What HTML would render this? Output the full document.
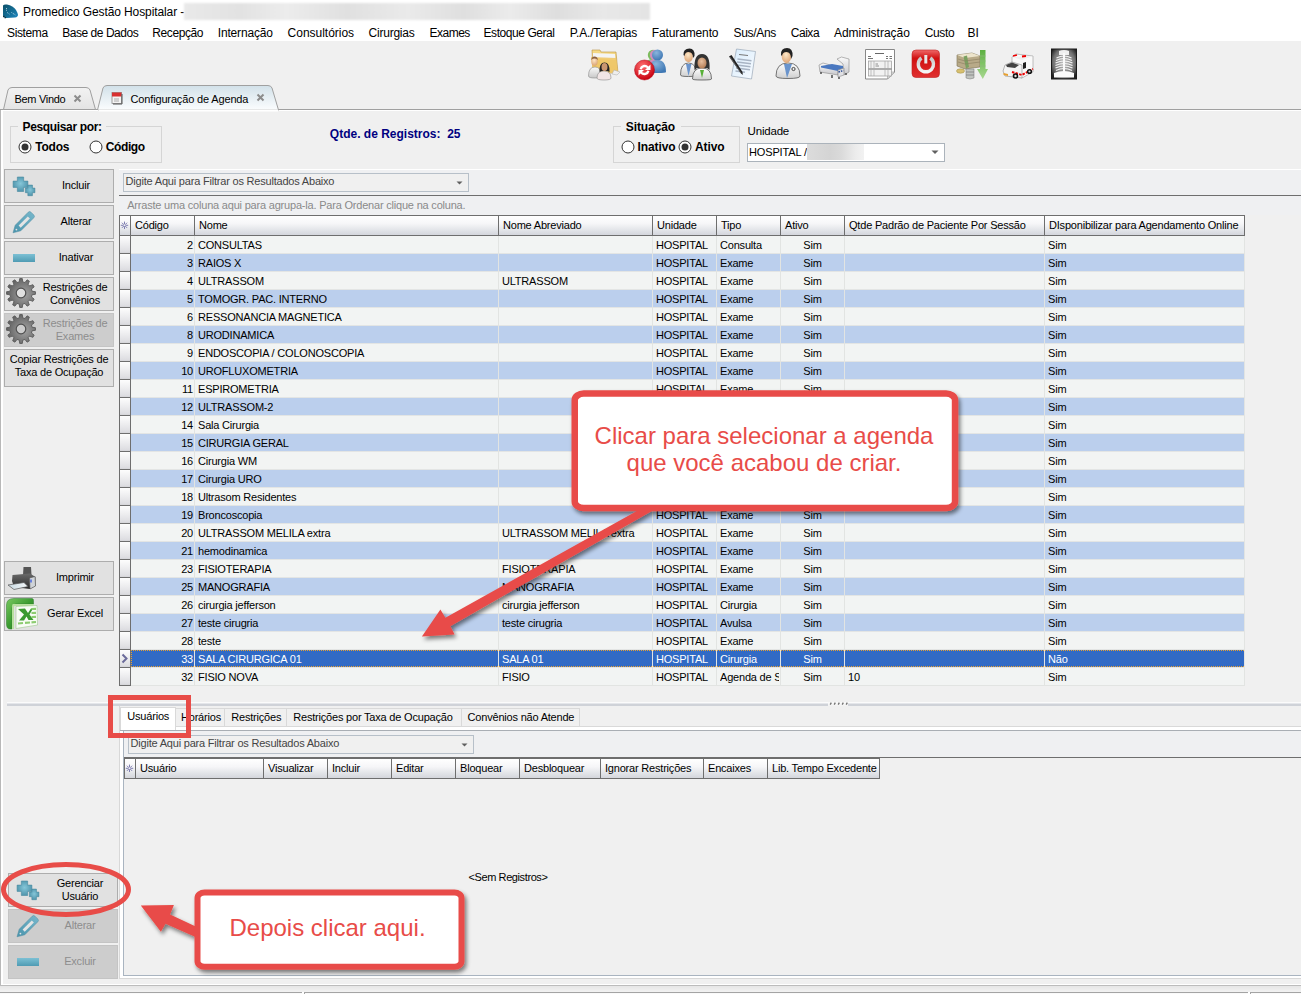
<!DOCTYPE html>
<html><head><meta charset="utf-8"><title>Promedico</title>
<style>
html,body{margin:0;padding:0}
body{width:1301px;height:994px;overflow:hidden;position:relative;background:#f0f0f0;font-family:"Liberation Sans",sans-serif;}
.t{position:absolute;white-space:pre;}
.b{position:absolute;box-sizing:border-box;}
svg{position:absolute;overflow:visible}
.tah{letter-spacing:-0.15px}
</style></head><body>

<div class="b" style="left:0px;top:0px;width:1301px;height:41px;background:#fff;"></div>
<svg style="left:0;top:0" width="22" height="22"><defs><linearGradient id="gi" x1="0" y1="0" x2="1" y2="1"><stop offset="0" stop-color="#0d5068"/><stop offset="0.6" stop-color="#15709a"/><stop offset="1" stop-color="#1f86c0"/></linearGradient></defs>
<path d="M3 5.5 Q4 4 7 4.5 Q13 5.5 16 10 Q17.5 12.5 18 14.5 Q18 17 15 17.5 L6 18 Q3 18 3 15.5Z" fill="url(#gi)"/>
<path d="M6.5 8 L6.5 11 M7.2 12.5 L10 14.5 M11.5 12.5 L15.5 15" stroke="#d8eef6" stroke-width="0.8" stroke-dasharray="0.9 0.9" fill="none"/>
<path d="M3.5 16 L6 18.5" stroke="#111" stroke-width="1.4" stroke-dasharray="1 1"/></svg>
<div class="t" style="left:23px;top:4.84px;font-size:12px;line-height:14px;color:#000;letter-spacing:-0.1px;">Promedico Gestão Hospitalar -</div>
<div class="b" style="left:184px;top:3px;width:466px;height:17px;background:linear-gradient(90deg,#e9e9e9 0%,#e2e2e2 12%,#ececec 22%,#e0e0e0 35%,#eaeaea 48%,#dfdfdf 60%,#ebebeb 70%,#dedede 80%,#e8e8e8 90%,#e4e4e4 100%);filter:blur(1px);"></div>
<div class="t" style="left:7.1px;top:25.84px;font-size:12px;line-height:14px;color:#000;letter-spacing:-0.394px;">Sistema</div>
<div class="t" style="left:62.2px;top:25.84px;font-size:12px;line-height:14px;color:#000;letter-spacing:-0.459px;">Base de Dados</div>
<div class="t" style="left:152.3px;top:25.84px;font-size:12px;line-height:14px;color:#000;letter-spacing:-0.418px;">Recepção</div>
<div class="t" style="left:217.8px;top:25.84px;font-size:12px;line-height:14px;color:#000;letter-spacing:-0.172px;">Internação</div>
<div class="t" style="left:287.6px;top:25.84px;font-size:12px;line-height:14px;color:#000;letter-spacing:-0.017px;">Consultórios</div>
<div class="t" style="left:368.6px;top:25.84px;font-size:12px;line-height:14px;color:#000;letter-spacing:-0.235px;">Cirurgias</div>
<div class="t" style="left:429.5px;top:25.84px;font-size:12px;line-height:14px;color:#000;letter-spacing:-0.5px;">Exames</div>
<div class="t" style="left:483.5px;top:25.84px;font-size:12px;line-height:14px;color:#000;letter-spacing:-0.432px;">Estoque Geral</div>
<div class="t" style="left:569.8px;top:25.84px;font-size:12px;line-height:14px;color:#000;letter-spacing:-0.194px;">P.A./Terapias</div>
<div class="t" style="left:651.8px;top:25.84px;font-size:12px;line-height:14px;color:#000;letter-spacing:-0.132px;">Faturamento</div>
<div class="t" style="left:733.6px;top:25.84px;font-size:12px;line-height:14px;color:#000;letter-spacing:-0.329px;">Sus/Ans</div>
<div class="t" style="left:790.7px;top:25.84px;font-size:12px;line-height:14px;color:#000;letter-spacing:-0.45px;">Caixa</div>
<div class="t" style="left:833.9px;top:25.84px;font-size:12px;line-height:14px;color:#000;letter-spacing:0px;">Administração</div>
<div class="t" style="left:924.7px;top:25.84px;font-size:12px;line-height:14px;color:#000;letter-spacing:-0.332px;">Custo</div>
<div class="t" style="left:967.5px;top:25.84px;font-size:12px;line-height:14px;color:#000;letter-spacing:0px;">BI</div>
<svg style="left:588px;top:48px" width="32" height="32" viewBox="0 0 32 32"><defs><linearGradient id="fo1" x1="0" y1="0" x2="0" y2="1"><stop offset="0" stop-color="#f6dc8a"/><stop offset="1" stop-color="#e2b850"/></linearGradient>
<radialGradient id="fc1" cx="45%" cy="35%" r="70%"><stop offset="0" stop-color="#fde6c8"/><stop offset="1" stop-color="#d9a070"/></radialGradient>
<linearGradient id="wb1" x1="0" y1="0" x2="0" y2="1"><stop offset="0" stop-color="#fafafa"/><stop offset="1" stop-color="#c8c8c8"/></linearGradient></defs>
<path d="M4 2 L12 2 L13 4 L28 4 L30 25 L5 25 Z" fill="url(#fo1)" stroke="#b89040" stroke-width="0.6"/>
<path d="M5 5 L27 6 L27.5 12 L5 10Z" fill="#f4f4f4"/>
<path d="M3 9 L28 10 L30 25 L5 25Z" fill="#efc86a" opacity="0.9"/>
<path d="M26 22 L32 24 L29 27 L24 26Z" fill="#eee" stroke="#aaa" stroke-width="0.5"/>
<path d="M0.5 28 Q0.5 19 7 19 Q13 19 13 27 Q13 30 7 30 Q0.5 30 0.5 28Z" fill="url(#wb1)" stroke="#888" stroke-width="0.6"/>
<ellipse cx="6.5" cy="13.5" rx="3.2" ry="4.2" fill="url(#fc1)"/><path d="M3.3 12 Q3.5 8.5 6.5 8.5 Q9.7 8.5 9.8 12 Q8 10.5 6.5 10.6 Q4.5 10.6 3.3 12Z" fill="#8a6040"/>
<path d="M9 30 Q9 23 16 23 Q23 23 23 30 Q23 32 16 32 Q9 32 9 30Z" fill="#f2e6e6" stroke="#888" stroke-width="0.6"/>
<path d="M11.5 24 Q11 14.5 16.5 14.5 Q22 14.5 21.5 24 L19.5 23 L13.5 23Z" fill="#222"/>
<ellipse cx="16.5" cy="19" rx="3" ry="4" fill="#c99670"/></svg>
<svg style="left:634px;top:48px" width="32" height="32" viewBox="0 0 32 32"><defs><radialGradient id="bl2" cx="40%" cy="30%" r="70%"><stop offset="0" stop-color="#8ab4dc"/><stop offset="1" stop-color="#3f78b4"/></radialGradient>
<radialGradient id="rd2" cx="40%" cy="30%" r="70%"><stop offset="0" stop-color="#ff7070"/><stop offset="1" stop-color="#c80010"/></radialGradient></defs>
<circle cx="19" cy="7" r="5.2" fill="#7cbc5c"/><path d="M11 20 Q11 11 19 11 Q26 11 26 20Z" fill="#7cbc5c"/>
<circle cx="21" cy="7" r="5.2" fill="#d08cbc"/><path d="M13 20 Q13 11 21 11 Q28 11 28 20Z" fill="#d08cbc"/>
<circle cx="23.5" cy="7" r="5.5" fill="url(#bl2)"/><path d="M15 24 Q15 12 23.5 12 Q32 12 32 24 Q32 25 23.5 25 Q15 25 15 24Z" fill="url(#bl2)"/>
<circle cx="10.5" cy="22" r="10" fill="url(#rd2)" stroke="#b00010" stroke-width="0.5"/>
<path d="M5.5 21 A5.2 5.2 0 0 1 14.5 18.5 L16.5 16.5 L16.5 22 L11 22 L13 20 A3.2 3.2 0 0 0 7.8 21.5Z" fill="#fff"/>
<path d="M15.5 23 A5.2 5.2 0 0 1 6.5 25.5 L4.5 27.5 L4.5 22 L10 22 L8 24 A3.2 3.2 0 0 0 13.2 22.5Z" fill="#fff"/></svg>
<svg style="left:680px;top:48px" width="32" height="32" viewBox="0 0 32 32"><defs><radialGradient id="fc3" cx="45%" cy="35%" r="70%"><stop offset="0" stop-color="#fde8c8"/><stop offset="1" stop-color="#dca070"/></radialGradient>
<radialGradient id="fw3" cx="45%" cy="35%" r="70%"><stop offset="0" stop-color="#e8c0a0"/><stop offset="1" stop-color="#b07850"/></radialGradient>
<linearGradient id="co3" x1="0" y1="0" x2="0" y2="1"><stop offset="0" stop-color="#fff"/><stop offset="1" stop-color="#d0d0d0"/></linearGradient></defs>
<path d="M0.5 27 Q0.5 15 8.5 15 Q16.5 15 16.5 27 Q16.5 28.5 8.5 28.5 Q0.5 28.5 0.5 27Z" fill="url(#co3)" stroke="#555" stroke-width="0.8"/>
<path d="M6 16 L8.5 28 L11.5 16Z" fill="#6a94cc"/>
<ellipse cx="8.5" cy="8.5" rx="4.3" ry="5.5" fill="url(#fc3)"/><path d="M3.5 7 Q3 0.5 9.5 0.5 Q15 0.5 14.5 8 L13 10 Q13 4 8.5 4 Q5 4 4.5 8Z" fill="#222"/>
<path d="M12.5 31 Q12.5 20 22 20 Q31.5 20 31.5 31 Q31.5 32 22 32 Q12.5 32 12.5 31Z" fill="url(#co3)" stroke="#555" stroke-width="0.8"/>
<path d="M20 22 L22 30 L24 22Z" fill="#58b038"/>
<path d="M14.5 22 Q13.5 6 22 6 Q30.5 6 29.5 22 L27 20 L17 20Z" fill="#333"/>
<ellipse cx="22" cy="15" rx="4.5" ry="5.5" fill="url(#fw3)"/></svg>
<svg style="left:726px;top:48px" width="32" height="32" viewBox="0 0 32 32"><defs><linearGradient id="dc4" x1="0" y1="0" x2="1" y2="1"><stop offset="0" stop-color="#d8ecfc"/><stop offset="1" stop-color="#f8fbff"/></linearGradient></defs>
<path d="M10.5 1 L29.5 3.5 L25.5 31 L5.5 28Z" fill="url(#dc4)" stroke="#9aa8b8" stroke-width="0.7"/>
<path d="M13 6.5 L22 7.5" stroke="#777" stroke-width="1"/>
<path d="M11.5 11 L25.5 12.8 M11 14 L25 15.8 M10.5 17 L24.5 18.8 M10 20 L24 21.8 M9.5 23 L19 24.3" stroke="#a8b4c4" stroke-width="1.4"/>
<path d="M3 8.5 L5.5 7 L16.5 24 L16.8 27 L14.5 25Z" fill="#222"/><path d="M4 9 L15 25" stroke="#888" stroke-width="0.6"/></svg>
<svg style="left:772px;top:48px" width="32" height="32" viewBox="0 0 32 32"><defs><radialGradient id="fc5" cx="45%" cy="35%" r="70%"><stop offset="0" stop-color="#fde8c8"/><stop offset="1" stop-color="#dca070"/></radialGradient>
<linearGradient id="co5" x1="0" y1="0" x2="0" y2="1"><stop offset="0" stop-color="#fff"/><stop offset="1" stop-color="#cfcfcf"/></linearGradient></defs>
<path d="M4 28 Q4 15 16 15 Q28 15 28 28 Q28 30.5 16 30.5 Q4 30.5 4 28Z" fill="url(#co5)" stroke="#555" stroke-width="0.8"/>
<path d="M12 16 L15 30 L20 16Z" fill="#6a94cc"/>
<circle cx="21.5" cy="21" r="1.6" fill="none" stroke="#444" stroke-width="1"/>
<ellipse cx="14.5" cy="8.5" rx="4.8" ry="6.5" fill="url(#fc5)"/><path d="M9 7 Q8.5 0 15 0 Q21 0 20.5 8 L19 11 Q19 4 14.5 4 Q10.5 4 10 8Z" fill="#222"/></svg>
<svg style="left:818px;top:48px" width="32" height="32" viewBox="0 0 32 32"><defs><linearGradient id="bd6" x1="0" y1="0" x2="0" y2="1"><stop offset="0" stop-color="#fafafa"/><stop offset="1" stop-color="#c8c8cc"/></linearGradient></defs>
<path d="M19 11 L23.5 9 L31 11 L31 24 L26 27 L25 16Z" fill="url(#bd6)" stroke="#888" stroke-width="0.6"/>
<path d="M1 17 L5 15 L20 19 L20 27 L2 24Z" fill="url(#bd6)" stroke="#888" stroke-width="0.6"/>
<path d="M3 18 L14 16 L25 18 L25 22 L20 23 L3 19.5Z" fill="#4a78c0"/>
<path d="M20 22 L26 20 L26 27 L20 29Z" fill="#e0e0e4" stroke="#888" stroke-width="0.6"/>
<path d="M20.5 24 L25.5 22.5" stroke="#2a4a90" stroke-width="1.5" stroke-dasharray="1.5 1"/>
<path d="M3 24 L3 26 M14 27 L14 30 M21 29 L21 31 M28 25 L28 27" stroke="#555" stroke-width="1.6"/></svg>
<svg style="left:864px;top:48px" width="32" height="32" viewBox="0 0 32 32"><path d="M1.5 1.5 L30.5 1.5 L30.5 24 L23.5 31 L1.5 31Z" fill="#fff" stroke="#888" stroke-width="1"/>
<path d="M23.5 31 L23.5 24 L30.5 24Z" fill="#e4e4e4" stroke="#999" stroke-width="0.6"/>
<path d="M11 5.5 L20 5.5" stroke="#666" stroke-width="1"/>
<path d="M4 8.5 L7 8.5 M4 10.5 L9 10.5 M22 8.5 L24 8.5 M25.5 8.5 L28 8.5 M22 10.5 L24 10.5 M25.5 10.5 L28 10.5" stroke="#666" stroke-width="0.9"/>
<rect x="4.5" y="13" width="23" height="15" fill="#f2f2f2" stroke="#999" stroke-width="0.7"/>
<path d="M4.5 21 L27.5 21" stroke="#666" stroke-width="1"/><path d="M7 13 L7 28 M10 13 L10 28 M21 13 L21 28 M24 13 L24 28" stroke="#aaa" stroke-width="0.7"/>
<path d="M11.5 16 L14 16 M11.5 18 L15 18" stroke="#777" stroke-width="0.8"/></svg>
<svg style="left:910px;top:48px" width="32" height="32" viewBox="0 0 32 32"><defs><linearGradient id="pw8" x1="0" y1="0" x2="0" y2="1"><stop offset="0" stop-color="#f06a6a"/><stop offset="0.3" stop-color="#d01010"/><stop offset="1" stop-color="#e03030"/></linearGradient>
<linearGradient id="rg8" x1="0" y1="0" x2="0" y2="1"><stop offset="0" stop-color="#c8c8c8"/><stop offset="1" stop-color="#f4f4f4"/></linearGradient></defs>
<rect x="2" y="2" width="27.5" height="27.5" rx="4" fill="url(#pw8)" stroke="#c02020" stroke-width="0.6"/>
<path d="M11.5 10 A7.6 7.6 0 1 0 20.3 10" stroke="url(#rg8)" stroke-width="3.4" fill="none"/><path d="M15.8 7 L15.8 15.5" stroke="#e8e8e8" stroke-width="3"/></svg>
<svg style="left:956px;top:48px" width="32" height="32" viewBox="0 0 32 32"><defs><linearGradient id="gr9" x1="0" y1="0" x2="0" y2="1"><stop offset="0" stop-color="#5cb040"/><stop offset="1" stop-color="#a8d890"/></linearGradient></defs>
<path d="M1 7 L16 5 L24 8 L24 19 L9 21 L1 18Z" fill="#b8aa88" stroke="#7a6e50" stroke-width="0.6"/>
<path d="M1 7 L16 5 L24 8 L9 10Z" fill="#ece4cc"/>
<path d="M7.5 8.5 L11 7.5 L13 19 L10 20.5Z" fill="#7aa060"/>
<path d="M2 11 L9 13 L24 11 M2 14 L9 16 L24 14" stroke="#8a7e60" stroke-width="0.6" fill="none"/>
<ellipse cx="4.5" cy="23" rx="4" ry="2.2" fill="#d8c070" stroke="#9a8a40" stroke-width="0.5"/>
<path d="M10 21 L18 21 L18 30 Q14 32 10 30Z" fill="#c0c4c0" stroke="#777" stroke-width="0.5"/><path d="M10 24 L18 24 M10 27 L18 27" stroke="#777" stroke-width="0.7"/>
<path d="M24 2 L29.5 2 L29.5 21 L32 21 L26.8 31 L21 21 L24 21Z" fill="url(#gr9)"/>
<path d="M24 8 L29.5 8 M24 13 L29.5 13 M24 18 L29.5 18" stroke="#8ab878" stroke-width="0.8"/></svg>
<svg style="left:1002px;top:48px" width="32" height="32" viewBox="0 0 32 32"><path d="M10 9 L14 6 L31 8 L31 24 L20 30 L10 26Z" fill="#fafafa" stroke="#999" stroke-width="0.6"/>
<path d="M1 23 L3 17 L10 14 L20 17 L20 30 L3 28Z" fill="#f4f4f4" stroke="#888" stroke-width="0.6"/>
<path d="M4 17 L10 14.5 L17 17 L13 20 L5 19Z" fill="#444"/>
<path d="M1.5 25 L6 26 L6 28 L1.5 27Z" fill="#e8a030"/>
<path d="M10 9 L31 8 L20 12Z" fill="#f0f0f0"/><path d="M11 8 L15 7 M20 8.5 L24 8" stroke="#e00" stroke-width="1.8"/>
<path d="M10 24 L20 27 L31 21" stroke="#e00" stroke-width="2" stroke-dasharray="2.5 1.2" fill="none"/>
<path d="M21 15 L24 14 L24 20 L21 21Z" fill="#222"/>
<circle cx="13.5" cy="28" r="2.8" fill="#111"/><circle cx="13.5" cy="28" r="1.2" fill="#ddd"/>
<circle cx="27.5" cy="23.5" r="2.6" fill="#111"/><circle cx="27.5" cy="23.5" r="1.1" fill="#ddd"/></svg>
<svg style="left:1048px;top:48px" width="32" height="32" viewBox="0 0 32 32"><defs><radialGradient id="xr11" cx="50%" cy="45%" r="65%"><stop offset="0" stop-color="#c8c8c8"/><stop offset="0.7" stop-color="#707070"/><stop offset="1" stop-color="#202020"/></radialGradient></defs>
<rect x="3" y="0.5" width="26" height="31" fill="#1a1a1a"/><rect x="4" y="1.5" width="24" height="29" fill="url(#xr11)"/>
<path d="M11 3 Q16 1 21 3 L21 7 L11 7Z" fill="#f0f0f0"/>
<path d="M8.5 10 Q16 6 23.5 10 M8 12.5 Q16 8.5 24 12.5 M7.5 15 Q16 11 24.5 15 M7.5 17.5 Q16 13.5 24.5 17.5 M7.5 20 Q16 16 24.5 20 M8 22.5 Q16 18.5 24 22.5" stroke="#f4f4f4" stroke-width="1.2" fill="none"/>
<path d="M16 5 L16 29" stroke="#fafafa" stroke-width="2"/>
<path d="M6 25 Q16 21 26 25 L26 29.5 L6 29.5Z" fill="#fafafa"/></svg>
<svg style="left:0;top:80px" width="1301" height="32">
<defs><linearGradient id="tabA" x1="0" y1="0" x2="0" y2="1"><stop offset="0" stop-color="#d2e1e9"/><stop offset="1" stop-color="#fbfdfe"/></linearGradient>
<linearGradient id="tabI" x1="0" y1="0" x2="0" y2="1"><stop offset="0" stop-color="#f2f2f2"/><stop offset="1" stop-color="#e4e4e4"/></linearGradient></defs>
<path d="M0 29.5 L1301 29.5" stroke="#a0a0a0" stroke-width="1"/>
<path d="M3.5 29.5 L8 10 Q9 7.5 12 7.5 L86 7.5 Q89 7.5 90 10 L95.5 29.5 Z" fill="url(#tabI)" stroke="#a0a0a0" stroke-width="1"/>
<path d="M97.5 30 L103 8 Q104 5.5 107 5.5 L268 5.5 Q271 5.5 272 8 L278.5 30 Z" fill="url(#tabA)" stroke="#a0a0a0" stroke-width="1"/>
<path d="M98.5 30.5 L278 30.5" stroke="#ffffff" stroke-width="2"/>
</svg>
<div class="t" style="left:14.5px;top:93.19px;font-size:11px;line-height:13px;color:#000;letter-spacing:-0.3px;">Bem Vindo</div>
<svg style="left:73px;top:94px" width="10" height="10"><path d="M1.5 1.5 L7.5 7.5 M7.5 1.5 L1.5 7.5" stroke="#8c8c8c" stroke-width="2"/></svg>
<svg style="left:111px;top:91px" width="12" height="14"><rect x="1" y="1.5" width="9.5" height="11" fill="#f4f4f4" stroke="#888" stroke-width="0.8"/><rect x="1" y="1.5" width="9.5" height="4" fill="#d83030"/><path d="M3 8 L8 8 M3 10 L8 10" stroke="#999" stroke-width="0.8"/><path d="M11 3 L11 13 L2 13" stroke="#555" stroke-width="1" fill="none"/></svg>
<div class="t" style="left:130.5px;top:92.69px;font-size:11px;line-height:13px;color:#000;letter-spacing:-0.15px;">Configuração de Agenda</div>
<svg style="left:256px;top:93px" width="10" height="10"><path d="M1.5 1.5 L7.5 7.5 M7.5 1.5 L1.5 7.5" stroke="#8c8c8c" stroke-width="2"/></svg>
<div class="b" style="left:0px;top:110px;width:1px;height:876px;background:#b8b8b8;"></div>
<div class="b" style="left:1px;top:110px;width:2px;height:875px;background:#fff;"></div>
<div class="b" style="left:1px;top:110px;width:97px;height:1px;background:#fff;"></div>
<div class="b" style="left:279px;top:110px;width:1022px;height:1px;background:#fff;"></div>
<div class="b" style="left:10px;top:126px;width:152px;height:37px;border:1px solid #d5d5d5;"></div>
<div class="b" style="left:18px;top:126px;width:88px;height:1px;background:#f0f0f0;"></div>
<div class="t" style="left:22.5px;top:119.84px;font-size:12px;line-height:14px;color:#000;font-weight:bold;letter-spacing:-0.35px;">Pesquisar por:</div>
<svg style="left:17.5px;top:139.5px" width="14" height="14"><circle cx="7" cy="7" r="6" fill="#fff" stroke="#333" stroke-width="1"/><circle cx="7" cy="7" r="3.5" fill="#333"/></svg>
<div class="t" style="left:35.3px;top:140.24px;font-size:12px;line-height:14px;color:#000;font-weight:bold;letter-spacing:-0.25px;">Todos</div>
<svg style="left:88.5px;top:139.5px" width="14" height="14"><circle cx="7" cy="7" r="6" fill="#fff" stroke="#333" stroke-width="1"/></svg>
<div class="t" style="left:105.8px;top:140.24px;font-size:12px;line-height:14px;color:#000;font-weight:bold;letter-spacing:-0.4px;">Código</div>
<div class="t" style="left:329.8px;top:127.04px;font-size:12px;line-height:14px;color:#000080;font-weight:bold;">Qtde. de Registros:  25</div>
<div class="b" style="left:613px;top:126px;width:127px;height:37px;border:1px solid #d5d5d5;"></div>
<div class="b" style="left:621px;top:126px;width:60px;height:1px;background:#f0f0f0;"></div>
<div class="t" style="left:625.8px;top:119.84px;font-size:12px;line-height:14px;color:#000;font-weight:bold;letter-spacing:-0.1px;">Situação</div>
<svg style="left:620.5px;top:139.5px" width="14" height="14"><circle cx="7" cy="7" r="6" fill="#fff" stroke="#333" stroke-width="1"/></svg>
<div class="t" style="left:637.5px;top:140.24px;font-size:12px;line-height:14px;color:#000;font-weight:bold;letter-spacing:-0.1px;">Inativo</div>
<svg style="left:678.3px;top:139.5px" width="14" height="14"><circle cx="7" cy="7" r="6" fill="#fff" stroke="#333" stroke-width="1"/><circle cx="7" cy="7" r="3.5" fill="#333"/></svg>
<div class="t" style="left:695px;top:140.24px;font-size:12px;line-height:14px;color:#000;font-weight:bold;letter-spacing:-0.1px;">Ativo</div>
<div class="t" style="left:747.6px;top:123.82px;font-size:11.5px;line-height:14px;color:#000;letter-spacing:-0.2px;">Unidade</div>
<div class="b" style="left:747px;top:143px;width:198px;height:19px;background:#fff;border:1px solid #abb3bb;"></div>
<div class="t" style="left:749px;top:146.29px;font-size:11px;line-height:13px;color:#000;letter-spacing:-0.15px;">HOSPITAL /</div>
<div class="b" style="left:807px;top:144px;width:57px;height:16px;background:linear-gradient(90deg,#dcdcdc,#d4d4d4 40%,#dadada 60%,#ececec 85%,#f2f2f2);"></div>
<svg style="left:931px;top:150px" width="8" height="5"><path d="M0.5 0.5 L7.5 0.5 L4 4Z" fill="#606060"/></svg>
<div class="b" style="left:4px;top:169px;width:110px;height:34px;background:#e1e1e1;border:1px solid #adadad;"></div>
<svg style="left:12px;top:176px" width="26" height="22"><defs><radialGradient id="pg169" cx="50%" cy="45%" r="60%"><stop offset="0" stop-color="#86c6d8"/><stop offset="1" stop-color="#4a90a8"/></radialGradient></defs><path d="M5.35 1 L11.65 1 L11.65 5.1 L15.9 5.1 L15.9 11.4 L11.65 11.4 L11.65 15.5 L5.35 15.5 L5.35 11.4 L1.1 11.4 L1.1 5.1 L5.35 5.1Z" fill="url(#pg169)" stroke="#4a8aa0" stroke-width="0.6"/><path d="M15.85 9.1 L20.45 9.1 L20.45 12.1 L22.9 12.1 L22.9 16.7 L20.45 16.7 L20.45 19.7 L15.85 19.7 L15.85 16.7 L13.4 16.7 L13.4 12.1 L15.85 12.1Z" fill="url(#pg169)" stroke="#4a8aa0" stroke-width="0.6"/></svg>
<div class="t" style="left:-4px;width:160px;text-align:center;top:179.19px;font-size:11px;line-height:13px;color:#000;letter-spacing:-0.2px">Incluir</div>
<div class="b" style="left:4px;top:205px;width:110px;height:34px;background:#e1e1e1;border:1px solid #adadad;"></div>
<svg style="left:12px;top:210px" width="26" height="26"><defs><linearGradient id="pn205" x1="0" y1="1" x2="1" y2="0"><stop offset="0" stop-color="#4a94ac"/><stop offset="1" stop-color="#78b8cc"/></linearGradient></defs><path d="M1 22.8 L3.2 15.2 L16.2 2.2 Q17.6 0.8 19 2.2 L21.8 5 Q23.2 6.4 21.8 7.8 L8.8 20.8 Z" fill="url(#pn205)" stroke="#4a8aa0" stroke-width="0.5"/><path d="M6.6 15.6 L15.8 6.4 L17.9 8.5 L8.7 17.7Z" fill="#e4e4e4"/><circle cx="4.4" cy="19.6" r="0.9" fill="#e4e4e4"/></svg>
<div class="t" style="left:-4px;width:160px;text-align:center;top:215.19px;font-size:11px;line-height:13px;color:#000;letter-spacing:-0.2px">Alterar</div>
<div class="b" style="left:4px;top:241px;width:110px;height:34px;background:#e1e1e1;border:1px solid #adadad;"></div>
<svg style="left:12px;top:253px" width="24" height="10"><defs><linearGradient id="mg241" x1="0" y1="0" x2="0" y2="1"><stop offset="0" stop-color="#7cc0d4"/><stop offset="1" stop-color="#4f9bb3"/></linearGradient></defs><rect x="1" y="1" width="22" height="8" fill="url(#mg241)"/></svg>
<div class="t" style="left:-4px;width:160px;text-align:center;top:251.19px;font-size:11px;line-height:13px;color:#000;letter-spacing:-0.2px">Inativar</div>
<div class="b" style="left:4px;top:277px;width:110px;height:34px;background:#e1e1e1;border:1px solid #adadad;"></div>
<svg style="left:5px;top:277px" width="32" height="32" opacity="1"><defs><radialGradient id="gg277" cx="60%" cy="55%" r="60%"><stop offset="0" stop-color="#a4a4a4"/><stop offset="1" stop-color="#606060"/></radialGradient></defs><path d="M27.06 14.25 L30.44 14.71 L30.44 17.29 L27.06 17.75 L26.46 20.01 L29.15 22.11 L27.86 24.34 L24.70 23.05 L23.05 24.70 L24.34 27.86 L22.11 29.15 L20.01 26.46 L17.75 27.06 L17.29 30.44 L14.71 30.44 L14.25 27.06 L11.99 26.46 L9.89 29.15 L7.66 27.86 L8.95 24.70 L7.30 23.05 L4.14 24.34 L2.85 22.11 L5.54 20.01 L4.94 17.75 L1.56 17.29 L1.56 14.71 L4.94 14.25 L5.54 11.99 L2.85 9.89 L4.14 7.66 L7.30 8.95 L8.95 7.30 L7.66 4.14 L9.89 2.85 L11.99 5.54 L14.25 4.94 L14.71 1.56 L17.29 1.56 L17.75 4.94 L20.01 5.54 L22.11 2.85 L24.34 4.14 L23.05 7.30 L24.70 8.95 L27.86 7.66 L29.15 9.89 L26.46 11.99Z" fill="url(#gg277)" stroke="#5a5a5a" stroke-width="0.9" stroke-linejoin="round"/><circle cx="16" cy="16" r="4.8" fill="#e1e1e1" stroke="#505050" stroke-width="1.2"/></svg>
<div class="t" style="left:-5px;width:160px;text-align:center;top:281.19px;font-size:11px;line-height:13px;color:#000;letter-spacing:-0.2px">Restrições de</div>
<div class="t" style="left:-5px;width:160px;text-align:center;top:294.19px;font-size:11px;line-height:13px;color:#000;letter-spacing:-0.2px">Convênios</div>
<div class="b" style="left:4px;top:313px;width:110px;height:34px;background:#cdcdcd;border:1px solid #c4c4c4;"></div>
<svg style="left:5px;top:313px" width="32" height="32" opacity="1"><defs><radialGradient id="gg313" cx="60%" cy="55%" r="60%"><stop offset="0" stop-color="#a4a4a4"/><stop offset="1" stop-color="#606060"/></radialGradient></defs><path d="M27.06 14.25 L30.44 14.71 L30.44 17.29 L27.06 17.75 L26.46 20.01 L29.15 22.11 L27.86 24.34 L24.70 23.05 L23.05 24.70 L24.34 27.86 L22.11 29.15 L20.01 26.46 L17.75 27.06 L17.29 30.44 L14.71 30.44 L14.25 27.06 L11.99 26.46 L9.89 29.15 L7.66 27.86 L8.95 24.70 L7.30 23.05 L4.14 24.34 L2.85 22.11 L5.54 20.01 L4.94 17.75 L1.56 17.29 L1.56 14.71 L4.94 14.25 L5.54 11.99 L2.85 9.89 L4.14 7.66 L7.30 8.95 L8.95 7.30 L7.66 4.14 L9.89 2.85 L11.99 5.54 L14.25 4.94 L14.71 1.56 L17.29 1.56 L17.75 4.94 L20.01 5.54 L22.11 2.85 L24.34 4.14 L23.05 7.30 L24.70 8.95 L27.86 7.66 L29.15 9.89 L26.46 11.99Z" fill="url(#gg313)" stroke="#5a5a5a" stroke-width="0.9" stroke-linejoin="round"/><circle cx="16" cy="16" r="4.8" fill="#cdcdcd" stroke="#505050" stroke-width="1.2"/></svg>
<div class="t" style="left:-5px;width:160px;text-align:center;top:317.19px;font-size:11px;line-height:13px;color:#8d8d8d;letter-spacing:-0.2px">Restrições de</div>
<div class="t" style="left:-5px;width:160px;text-align:center;top:330.19px;font-size:11px;line-height:13px;color:#8d8d8d;letter-spacing:-0.2px">Exames</div>
<div class="b" style="left:4px;top:349px;width:110px;height:38px;background:#e1e1e1;border:1px solid #adadad;"></div>
<div class="t" style="left:-21px;width:160px;text-align:center;top:353.19px;font-size:11px;line-height:13px;color:#000;letter-spacing:-0.2px">Copiar Restrições de</div>
<div class="t" style="left:-21px;width:160px;text-align:center;top:366.19px;font-size:11px;line-height:13px;color:#000;letter-spacing:-0.2px">Taxa de Ocupação</div>
<div class="b" style="left:4px;top:561px;width:110px;height:34px;background:#e1e1e1;border:1px solid #adadad;"></div>
<svg style="left:4px;top:561px" width="36" height="34"><defs><linearGradient id="pr1" x1="0" y1="0" x2="0" y2="1"><stop offset="0" stop-color="#6a6a6a"/><stop offset="1" stop-color="#2a2a2a"/></linearGradient><linearGradient id="pr2" x1="0" y1="0" x2="1" y2="0"><stop offset="0" stop-color="#c8d8e0"/><stop offset="1" stop-color="#f4f8fa"/></linearGradient></defs><path d="M19.5 6 L27 6 L27.5 14 L19 14Z" fill="#555"/><path d="M8.5 14 L26 12.5 L31.5 16 L31.5 25 L26 28 L10 26 L8 20Z" fill="url(#pr1)"/><path d="M25.5 17 L31 15.5 L31.5 25 L26 28Z" fill="#d0d4d8" stroke="#555" stroke-width="0.6"/><rect x="26.3" y="18.5" width="1.4" height="3" fill="#4060e0"/><path d="M4 24 L20 21.5 L24 25.5 L10 28.5Z" fill="url(#pr2)" stroke="#555" stroke-width="0.7"/></svg>
<div class="t" style="left:-5px;width:160px;text-align:center;top:571.19px;font-size:11px;line-height:13px;color:#000;letter-spacing:-0.2px">Imprimir</div>
<div class="b" style="left:4px;top:597px;width:110px;height:34px;background:#e1e1e1;border:1px solid #adadad;"></div>
<svg style="left:4px;top:597px" width="36" height="34"><defs><linearGradient id="xg" x1="0" y1="0" x2="1" y2="1"><stop offset="0" stop-color="#78c860"/><stop offset="0.5" stop-color="#3a9a30"/><stop offset="1" stop-color="#1e6a20"/></linearGradient></defs><path d="M2.5 8 Q2.5 1.5 10 1.5 L28 1.5 Q29.5 1.5 29.5 3.5 L29.5 7 L12 7 Q8 7 8 11 L8 32 L6 32 Q2.5 32 2.5 27Z" fill="url(#xg)" stroke="#2a7a2a" stroke-width="0.5"/><path d="M9 7 L29.5 7 L29.5 9 L11 9 Q10 9 10 10 L10 32 L8 32 L8 11 Q8 7 9 7Z" fill="#b8e0a0"/><path d="M12 9.5 L33 8.5 L33.5 28 L12 31.5Z" fill="#f8fcf6" stroke="#a0c890" stroke-width="0.6"/><path d="M14 12 L21 11.5 L24 16 L27 11.5 L29 11.5 L25.5 17.5 L29.5 23 L24.5 23 L22.5 19.5 L20 23.5 L15 23.5 L20 17.5Z" fill="#3a9a30"/><path d="M27.5 12 L32 11.8 M27.5 16 L32 15.8 M27.5 20 L32 19.8 M14 26.5 L19 26 M21 25.8 L26 25.5 M27.5 25.3 L32 25" stroke="#8ccc70" stroke-width="2.2"/></svg>
<div class="t" style="left:-5px;width:160px;text-align:center;top:607.19px;font-size:11px;line-height:13px;color:#000;letter-spacing:-0.2px">Gerar Excel</div>
<div class="b" style="left:119px;top:169px;width:1182px;height:1px;background:#fff;"></div>
<div class="b" style="left:119px;top:170px;width:1182px;height:25px;background:#eff0f2;"></div>
<div class="b" style="left:119px;top:195px;width:1182px;height:1px;background:#6e6e6e;"></div>
<div class="b" style="left:123px;top:173px;width:346px;height:19px;background:#f0f0f0;border:1px solid #b7c0c9;"></div>
<div class="t" style="left:125.6px;top:175.39px;font-size:11px;line-height:13px;color:#444;letter-spacing:-0.2px;">Digite Aqui para Filtrar os Resultados Abaixo</div>
<svg style="left:456px;top:181px" width="8" height="5"><path d="M0.5 0.5 L6.5 0.5 L3.5 3.5Z" fill="#606060"/></svg>
<div class="b" style="left:119px;top:196px;width:1182px;height:19px;background:#eff0f2;"></div>
<div class="t" style="left:127.2px;top:198.99px;font-size:11px;line-height:13px;color:#8a8a8a;letter-spacing:-0.2px;">Arraste uma coluna aqui para agrupa-la. Para Ordenar clique na coluna.</div>
<div class="b" style="left:119px;top:215px;width:1126px;height:21px;background:linear-gradient(#ffffff,#f6f6f8 40%,#e2e4e8 75%,#d4d6dc);border:1px solid #6e6e6e;"></div>
<div class="b" style="left:130px;top:215px;width:1px;height:21px;background:#6e6e6e;"></div>
<div class="b" style="left:194px;top:215px;width:1px;height:21px;background:#6e6e6e;"></div>
<div class="b" style="left:498px;top:215px;width:1px;height:21px;background:#6e6e6e;"></div>
<div class="b" style="left:652px;top:215px;width:1px;height:21px;background:#6e6e6e;"></div>
<div class="b" style="left:716px;top:215px;width:1px;height:21px;background:#6e6e6e;"></div>
<div class="b" style="left:780px;top:215px;width:1px;height:21px;background:#6e6e6e;"></div>
<div class="b" style="left:844px;top:215px;width:1px;height:21px;background:#6e6e6e;"></div>
<div class="b" style="left:1044px;top:215px;width:1px;height:21px;background:#6e6e6e;"></div>
<svg style="left:120px;top:219px" width="10" height="12"><g stroke="#7070a8" stroke-width="0.9" stroke-linecap="round"><path d="M4.5 3 L4.5 9.6 M1.2 6.3 L7.8 6.3 M2.2 4 L6.8 8.6 M2.2 8.6 L6.8 4"/></g><circle cx="4.5" cy="6.3" r="1" fill="#f0f0f4"/></svg>
<div class="t" style="left:135px;top:218.89px;font-size:11px;line-height:13px;color:#000;letter-spacing:-0.2px;">Código</div>
<div class="t" style="left:199px;top:218.89px;font-size:11px;line-height:13px;color:#000;letter-spacing:-0.2px;">Nome</div>
<div class="t" style="left:503px;top:218.89px;font-size:11px;line-height:13px;color:#000;letter-spacing:-0.2px;">Nome Abreviado</div>
<div class="t" style="left:657px;top:218.89px;font-size:11px;line-height:13px;color:#000;letter-spacing:-0.2px;">Unidade</div>
<div class="t" style="left:721px;top:218.89px;font-size:11px;line-height:13px;color:#000;letter-spacing:-0.2px;">Tipo</div>
<div class="t" style="left:785px;top:218.89px;font-size:11px;line-height:13px;color:#000;letter-spacing:-0.2px;">Ativo</div>
<div class="t" style="left:849px;top:218.89px;font-size:11px;line-height:13px;color:#000;letter-spacing:-0.2px;">Qtde Padrão de Paciente Por Sessão</div>
<div class="t" style="left:1049px;top:218.89px;font-size:11px;line-height:13px;color:#000;letter-spacing:-0.2px;">DIsponibilizar para Agendamento Online</div>
<div class="b" style="left:131px;top:236px;width:1113px;height:17px;background:#f2f4f3;"></div>
<div class="b" style="left:131px;top:253px;width:1113px;height:1px;background:#e3e5e4;"></div>
<div class="b" style="left:120px;top:236px;width:10px;height:17px;background:linear-gradient(#fdfdfd,#eeeef0 45%,#dedee2 90%,#d4d4d8);"></div>
<div class="b" style="left:119px;top:253px;width:12px;height:1px;background:#6e6e6e;"></div>
<div class="b" style="left:131px;top:254px;width:1113px;height:17px;background:#bbcfed;"></div>
<div class="b" style="left:131px;top:271px;width:1113px;height:1px;background:#e3e5e4;"></div>
<div class="b" style="left:120px;top:254px;width:10px;height:17px;background:linear-gradient(#fdfdfd,#eeeef0 45%,#dedee2 90%,#d4d4d8);"></div>
<div class="b" style="left:119px;top:271px;width:12px;height:1px;background:#6e6e6e;"></div>
<div class="b" style="left:131px;top:272px;width:1113px;height:17px;background:#f2f4f3;"></div>
<div class="b" style="left:131px;top:289px;width:1113px;height:1px;background:#e3e5e4;"></div>
<div class="b" style="left:120px;top:272px;width:10px;height:17px;background:linear-gradient(#fdfdfd,#eeeef0 45%,#dedee2 90%,#d4d4d8);"></div>
<div class="b" style="left:119px;top:289px;width:12px;height:1px;background:#6e6e6e;"></div>
<div class="b" style="left:131px;top:290px;width:1113px;height:17px;background:#bbcfed;"></div>
<div class="b" style="left:131px;top:307px;width:1113px;height:1px;background:#e3e5e4;"></div>
<div class="b" style="left:120px;top:290px;width:10px;height:17px;background:linear-gradient(#fdfdfd,#eeeef0 45%,#dedee2 90%,#d4d4d8);"></div>
<div class="b" style="left:119px;top:307px;width:12px;height:1px;background:#6e6e6e;"></div>
<div class="b" style="left:131px;top:308px;width:1113px;height:17px;background:#f2f4f3;"></div>
<div class="b" style="left:131px;top:325px;width:1113px;height:1px;background:#e3e5e4;"></div>
<div class="b" style="left:120px;top:308px;width:10px;height:17px;background:linear-gradient(#fdfdfd,#eeeef0 45%,#dedee2 90%,#d4d4d8);"></div>
<div class="b" style="left:119px;top:325px;width:12px;height:1px;background:#6e6e6e;"></div>
<div class="b" style="left:131px;top:326px;width:1113px;height:17px;background:#bbcfed;"></div>
<div class="b" style="left:131px;top:343px;width:1113px;height:1px;background:#e3e5e4;"></div>
<div class="b" style="left:120px;top:326px;width:10px;height:17px;background:linear-gradient(#fdfdfd,#eeeef0 45%,#dedee2 90%,#d4d4d8);"></div>
<div class="b" style="left:119px;top:343px;width:12px;height:1px;background:#6e6e6e;"></div>
<div class="b" style="left:131px;top:344px;width:1113px;height:17px;background:#f2f4f3;"></div>
<div class="b" style="left:131px;top:361px;width:1113px;height:1px;background:#e3e5e4;"></div>
<div class="b" style="left:120px;top:344px;width:10px;height:17px;background:linear-gradient(#fdfdfd,#eeeef0 45%,#dedee2 90%,#d4d4d8);"></div>
<div class="b" style="left:119px;top:361px;width:12px;height:1px;background:#6e6e6e;"></div>
<div class="b" style="left:131px;top:362px;width:1113px;height:17px;background:#bbcfed;"></div>
<div class="b" style="left:131px;top:379px;width:1113px;height:1px;background:#e3e5e4;"></div>
<div class="b" style="left:120px;top:362px;width:10px;height:17px;background:linear-gradient(#fdfdfd,#eeeef0 45%,#dedee2 90%,#d4d4d8);"></div>
<div class="b" style="left:119px;top:379px;width:12px;height:1px;background:#6e6e6e;"></div>
<div class="b" style="left:131px;top:380px;width:1113px;height:17px;background:#f2f4f3;"></div>
<div class="b" style="left:131px;top:397px;width:1113px;height:1px;background:#e3e5e4;"></div>
<div class="b" style="left:120px;top:380px;width:10px;height:17px;background:linear-gradient(#fdfdfd,#eeeef0 45%,#dedee2 90%,#d4d4d8);"></div>
<div class="b" style="left:119px;top:397px;width:12px;height:1px;background:#6e6e6e;"></div>
<div class="b" style="left:131px;top:398px;width:1113px;height:17px;background:#bbcfed;"></div>
<div class="b" style="left:131px;top:415px;width:1113px;height:1px;background:#e3e5e4;"></div>
<div class="b" style="left:120px;top:398px;width:10px;height:17px;background:linear-gradient(#fdfdfd,#eeeef0 45%,#dedee2 90%,#d4d4d8);"></div>
<div class="b" style="left:119px;top:415px;width:12px;height:1px;background:#6e6e6e;"></div>
<div class="b" style="left:131px;top:416px;width:1113px;height:17px;background:#f2f4f3;"></div>
<div class="b" style="left:131px;top:433px;width:1113px;height:1px;background:#e3e5e4;"></div>
<div class="b" style="left:120px;top:416px;width:10px;height:17px;background:linear-gradient(#fdfdfd,#eeeef0 45%,#dedee2 90%,#d4d4d8);"></div>
<div class="b" style="left:119px;top:433px;width:12px;height:1px;background:#6e6e6e;"></div>
<div class="b" style="left:131px;top:434px;width:1113px;height:17px;background:#bbcfed;"></div>
<div class="b" style="left:131px;top:451px;width:1113px;height:1px;background:#e3e5e4;"></div>
<div class="b" style="left:120px;top:434px;width:10px;height:17px;background:linear-gradient(#fdfdfd,#eeeef0 45%,#dedee2 90%,#d4d4d8);"></div>
<div class="b" style="left:119px;top:451px;width:12px;height:1px;background:#6e6e6e;"></div>
<div class="b" style="left:131px;top:452px;width:1113px;height:17px;background:#f2f4f3;"></div>
<div class="b" style="left:131px;top:469px;width:1113px;height:1px;background:#e3e5e4;"></div>
<div class="b" style="left:120px;top:452px;width:10px;height:17px;background:linear-gradient(#fdfdfd,#eeeef0 45%,#dedee2 90%,#d4d4d8);"></div>
<div class="b" style="left:119px;top:469px;width:12px;height:1px;background:#6e6e6e;"></div>
<div class="b" style="left:131px;top:470px;width:1113px;height:17px;background:#bbcfed;"></div>
<div class="b" style="left:131px;top:487px;width:1113px;height:1px;background:#e3e5e4;"></div>
<div class="b" style="left:120px;top:470px;width:10px;height:17px;background:linear-gradient(#fdfdfd,#eeeef0 45%,#dedee2 90%,#d4d4d8);"></div>
<div class="b" style="left:119px;top:487px;width:12px;height:1px;background:#6e6e6e;"></div>
<div class="b" style="left:131px;top:488px;width:1113px;height:17px;background:#f2f4f3;"></div>
<div class="b" style="left:131px;top:505px;width:1113px;height:1px;background:#e3e5e4;"></div>
<div class="b" style="left:120px;top:488px;width:10px;height:17px;background:linear-gradient(#fdfdfd,#eeeef0 45%,#dedee2 90%,#d4d4d8);"></div>
<div class="b" style="left:119px;top:505px;width:12px;height:1px;background:#6e6e6e;"></div>
<div class="b" style="left:131px;top:506px;width:1113px;height:17px;background:#bbcfed;"></div>
<div class="b" style="left:131px;top:523px;width:1113px;height:1px;background:#e3e5e4;"></div>
<div class="b" style="left:120px;top:506px;width:10px;height:17px;background:linear-gradient(#fdfdfd,#eeeef0 45%,#dedee2 90%,#d4d4d8);"></div>
<div class="b" style="left:119px;top:523px;width:12px;height:1px;background:#6e6e6e;"></div>
<div class="b" style="left:131px;top:524px;width:1113px;height:17px;background:#f2f4f3;"></div>
<div class="b" style="left:131px;top:541px;width:1113px;height:1px;background:#e3e5e4;"></div>
<div class="b" style="left:120px;top:524px;width:10px;height:17px;background:linear-gradient(#fdfdfd,#eeeef0 45%,#dedee2 90%,#d4d4d8);"></div>
<div class="b" style="left:119px;top:541px;width:12px;height:1px;background:#6e6e6e;"></div>
<div class="b" style="left:131px;top:542px;width:1113px;height:17px;background:#bbcfed;"></div>
<div class="b" style="left:131px;top:559px;width:1113px;height:1px;background:#e3e5e4;"></div>
<div class="b" style="left:120px;top:542px;width:10px;height:17px;background:linear-gradient(#fdfdfd,#eeeef0 45%,#dedee2 90%,#d4d4d8);"></div>
<div class="b" style="left:119px;top:559px;width:12px;height:1px;background:#6e6e6e;"></div>
<div class="b" style="left:131px;top:560px;width:1113px;height:17px;background:#f2f4f3;"></div>
<div class="b" style="left:131px;top:577px;width:1113px;height:1px;background:#e3e5e4;"></div>
<div class="b" style="left:120px;top:560px;width:10px;height:17px;background:linear-gradient(#fdfdfd,#eeeef0 45%,#dedee2 90%,#d4d4d8);"></div>
<div class="b" style="left:119px;top:577px;width:12px;height:1px;background:#6e6e6e;"></div>
<div class="b" style="left:131px;top:578px;width:1113px;height:17px;background:#bbcfed;"></div>
<div class="b" style="left:131px;top:595px;width:1113px;height:1px;background:#e3e5e4;"></div>
<div class="b" style="left:120px;top:578px;width:10px;height:17px;background:linear-gradient(#fdfdfd,#eeeef0 45%,#dedee2 90%,#d4d4d8);"></div>
<div class="b" style="left:119px;top:595px;width:12px;height:1px;background:#6e6e6e;"></div>
<div class="b" style="left:131px;top:596px;width:1113px;height:17px;background:#f2f4f3;"></div>
<div class="b" style="left:131px;top:613px;width:1113px;height:1px;background:#e3e5e4;"></div>
<div class="b" style="left:120px;top:596px;width:10px;height:17px;background:linear-gradient(#fdfdfd,#eeeef0 45%,#dedee2 90%,#d4d4d8);"></div>
<div class="b" style="left:119px;top:613px;width:12px;height:1px;background:#6e6e6e;"></div>
<div class="b" style="left:131px;top:614px;width:1113px;height:17px;background:#bbcfed;"></div>
<div class="b" style="left:131px;top:631px;width:1113px;height:1px;background:#e3e5e4;"></div>
<div class="b" style="left:120px;top:614px;width:10px;height:17px;background:linear-gradient(#fdfdfd,#eeeef0 45%,#dedee2 90%,#d4d4d8);"></div>
<div class="b" style="left:119px;top:631px;width:12px;height:1px;background:#6e6e6e;"></div>
<div class="b" style="left:131px;top:632px;width:1113px;height:17px;background:#f2f4f3;"></div>
<div class="b" style="left:131px;top:649px;width:1113px;height:1px;background:#e3e5e4;"></div>
<div class="b" style="left:120px;top:632px;width:10px;height:17px;background:linear-gradient(#fdfdfd,#eeeef0 45%,#dedee2 90%,#d4d4d8);"></div>
<div class="b" style="left:119px;top:649px;width:12px;height:1px;background:#6e6e6e;"></div>
<div class="b" style="left:131px;top:650px;width:1113px;height:17px;background:#316ac5;"></div>
<div class="b" style="left:131px;top:667px;width:1113px;height:1px;background:#e3e5e4;"></div>
<div class="b" style="left:120px;top:650px;width:10px;height:17px;background:linear-gradient(#fdfdfd,#eeeef0 45%,#dedee2 90%,#d4d4d8);"></div>
<div class="b" style="left:119px;top:667px;width:12px;height:1px;background:#6e6e6e;"></div>
<div class="b" style="left:131px;top:668px;width:1113px;height:17px;background:#f2f4f3;"></div>
<div class="b" style="left:131px;top:685px;width:1113px;height:1px;background:#e3e5e4;"></div>
<div class="b" style="left:120px;top:668px;width:10px;height:17px;background:linear-gradient(#fdfdfd,#eeeef0 45%,#dedee2 90%,#d4d4d8);"></div>
<div class="b" style="left:119px;top:685px;width:12px;height:1px;background:#6e6e6e;"></div>
<div class="b" style="left:119px;top:236px;width:1px;height:450px;background:#6e6e6e;"></div>
<div class="b" style="left:130px;top:236px;width:1px;height:450px;background:#6e6e6e;"></div>
<div class="b" style="left:194px;top:236px;width:1px;height:450px;background:#e2e4e2;"></div>
<div class="b" style="left:498px;top:236px;width:1px;height:450px;background:#e2e4e2;"></div>
<div class="b" style="left:652px;top:236px;width:1px;height:450px;background:#e2e4e2;"></div>
<div class="b" style="left:716px;top:236px;width:1px;height:450px;background:#e2e4e2;"></div>
<div class="b" style="left:780px;top:236px;width:1px;height:450px;background:#e2e4e2;"></div>
<div class="b" style="left:844px;top:236px;width:1px;height:450px;background:#e2e4e2;"></div>
<div class="b" style="left:1044px;top:236px;width:1px;height:450px;background:#e2e4e2;"></div>
<div class="b" style="left:1244px;top:236px;width:1px;height:450px;background:#e2e4e2;"></div>
<div class="b" style="left:131px;top:685px;width:1114px;height:1px;background:#e2e4e2;"></div>
<div class="b" style="left:131px;top:650px;width:1113px;height:1px;background:repeating-linear-gradient(90deg,#e8a030 0 1px,transparent 1px 2px);"></div>
<div class="b" style="left:131px;top:666px;width:1113px;height:1px;background:repeating-linear-gradient(90deg,#e8a030 0 1px,transparent 1px 2px);"></div>
<div class="b" style="left:131px;top:650px;width:1px;height:17px;background:repeating-linear-gradient(180deg,#e8a030 0 1px,transparent 1px 2px);"></div>
<svg style="left:120px;top:652px" width="10" height="14"><path d="M2.5 2.5 L6.5 6.5 L2.5 10.5" stroke="#6b6b9a" stroke-width="2" fill="none"/></svg>
<div class="t" style="left:131px;width:62px;text-align:right;top:238.70px;font-size:11px;line-height:13px;color:#000;letter-spacing:-0.2px">2</div>
<div class="t" style="left:198px;top:238.69px;font-size:11px;line-height:13px;color:#000;letter-spacing:-0.2px;">CONSULTAS</div>
<div class="t" style="left:656px;top:238.69px;font-size:11px;line-height:13px;color:#000;letter-spacing:-0.2px;">HOSPITAL</div>
<div class="t" style="left:720px;width:59px;overflow:hidden;top:238.70px;font-size:11px;line-height:13px;color:#000;letter-spacing:-0.2px">Consulta</div>
<div class="t" style="left:781px;width:63px;text-align:center;top:238.70px;font-size:11px;line-height:13px;color:#000;letter-spacing:-0.2px">Sim</div>
<div class="t" style="left:1048px;top:238.69px;font-size:11px;line-height:13px;color:#000;letter-spacing:-0.2px;">Sim</div>
<div class="t" style="left:131px;width:62px;text-align:right;top:256.70px;font-size:11px;line-height:13px;color:#000;letter-spacing:-0.2px">3</div>
<div class="t" style="left:198px;top:256.69px;font-size:11px;line-height:13px;color:#000;letter-spacing:-0.2px;">RAIOS X</div>
<div class="t" style="left:656px;top:256.69px;font-size:11px;line-height:13px;color:#000;letter-spacing:-0.2px;">HOSPITAL</div>
<div class="t" style="left:720px;width:59px;overflow:hidden;top:256.70px;font-size:11px;line-height:13px;color:#000;letter-spacing:-0.2px">Exame</div>
<div class="t" style="left:781px;width:63px;text-align:center;top:256.70px;font-size:11px;line-height:13px;color:#000;letter-spacing:-0.2px">Sim</div>
<div class="t" style="left:1048px;top:256.69px;font-size:11px;line-height:13px;color:#000;letter-spacing:-0.2px;">Sim</div>
<div class="t" style="left:131px;width:62px;text-align:right;top:274.70px;font-size:11px;line-height:13px;color:#000;letter-spacing:-0.2px">4</div>
<div class="t" style="left:198px;top:274.69px;font-size:11px;line-height:13px;color:#000;letter-spacing:-0.2px;">ULTRASSOM</div>
<div class="t" style="left:502px;top:274.69px;font-size:11px;line-height:13px;color:#000;letter-spacing:-0.2px;">ULTRASSOM</div>
<div class="t" style="left:656px;top:274.69px;font-size:11px;line-height:13px;color:#000;letter-spacing:-0.2px;">HOSPITAL</div>
<div class="t" style="left:720px;width:59px;overflow:hidden;top:274.70px;font-size:11px;line-height:13px;color:#000;letter-spacing:-0.2px">Exame</div>
<div class="t" style="left:781px;width:63px;text-align:center;top:274.70px;font-size:11px;line-height:13px;color:#000;letter-spacing:-0.2px">Sim</div>
<div class="t" style="left:1048px;top:274.69px;font-size:11px;line-height:13px;color:#000;letter-spacing:-0.2px;">Sim</div>
<div class="t" style="left:131px;width:62px;text-align:right;top:292.70px;font-size:11px;line-height:13px;color:#000;letter-spacing:-0.2px">5</div>
<div class="t" style="left:198px;top:292.69px;font-size:11px;line-height:13px;color:#000;letter-spacing:-0.2px;">TOMOGR. PAC. INTERNO</div>
<div class="t" style="left:656px;top:292.69px;font-size:11px;line-height:13px;color:#000;letter-spacing:-0.2px;">HOSPITAL</div>
<div class="t" style="left:720px;width:59px;overflow:hidden;top:292.70px;font-size:11px;line-height:13px;color:#000;letter-spacing:-0.2px">Exame</div>
<div class="t" style="left:781px;width:63px;text-align:center;top:292.70px;font-size:11px;line-height:13px;color:#000;letter-spacing:-0.2px">Sim</div>
<div class="t" style="left:1048px;top:292.69px;font-size:11px;line-height:13px;color:#000;letter-spacing:-0.2px;">Sim</div>
<div class="t" style="left:131px;width:62px;text-align:right;top:310.70px;font-size:11px;line-height:13px;color:#000;letter-spacing:-0.2px">6</div>
<div class="t" style="left:198px;top:310.69px;font-size:11px;line-height:13px;color:#000;letter-spacing:-0.2px;">RESSONANCIA MAGNETICA</div>
<div class="t" style="left:656px;top:310.69px;font-size:11px;line-height:13px;color:#000;letter-spacing:-0.2px;">HOSPITAL</div>
<div class="t" style="left:720px;width:59px;overflow:hidden;top:310.70px;font-size:11px;line-height:13px;color:#000;letter-spacing:-0.2px">Exame</div>
<div class="t" style="left:781px;width:63px;text-align:center;top:310.70px;font-size:11px;line-height:13px;color:#000;letter-spacing:-0.2px">Sim</div>
<div class="t" style="left:1048px;top:310.69px;font-size:11px;line-height:13px;color:#000;letter-spacing:-0.2px;">Sim</div>
<div class="t" style="left:131px;width:62px;text-align:right;top:328.70px;font-size:11px;line-height:13px;color:#000;letter-spacing:-0.2px">8</div>
<div class="t" style="left:198px;top:328.69px;font-size:11px;line-height:13px;color:#000;letter-spacing:-0.2px;">URODINAMICA</div>
<div class="t" style="left:656px;top:328.69px;font-size:11px;line-height:13px;color:#000;letter-spacing:-0.2px;">HOSPITAL</div>
<div class="t" style="left:720px;width:59px;overflow:hidden;top:328.70px;font-size:11px;line-height:13px;color:#000;letter-spacing:-0.2px">Exame</div>
<div class="t" style="left:781px;width:63px;text-align:center;top:328.70px;font-size:11px;line-height:13px;color:#000;letter-spacing:-0.2px">Sim</div>
<div class="t" style="left:1048px;top:328.69px;font-size:11px;line-height:13px;color:#000;letter-spacing:-0.2px;">Sim</div>
<div class="t" style="left:131px;width:62px;text-align:right;top:346.70px;font-size:11px;line-height:13px;color:#000;letter-spacing:-0.2px">9</div>
<div class="t" style="left:198px;top:346.69px;font-size:11px;line-height:13px;color:#000;letter-spacing:-0.2px;">ENDOSCOPIA / COLONOSCOPIA</div>
<div class="t" style="left:656px;top:346.69px;font-size:11px;line-height:13px;color:#000;letter-spacing:-0.2px;">HOSPITAL</div>
<div class="t" style="left:720px;width:59px;overflow:hidden;top:346.70px;font-size:11px;line-height:13px;color:#000;letter-spacing:-0.2px">Exame</div>
<div class="t" style="left:781px;width:63px;text-align:center;top:346.70px;font-size:11px;line-height:13px;color:#000;letter-spacing:-0.2px">Sim</div>
<div class="t" style="left:1048px;top:346.69px;font-size:11px;line-height:13px;color:#000;letter-spacing:-0.2px;">Sim</div>
<div class="t" style="left:131px;width:62px;text-align:right;top:364.70px;font-size:11px;line-height:13px;color:#000;letter-spacing:-0.2px">10</div>
<div class="t" style="left:198px;top:364.69px;font-size:11px;line-height:13px;color:#000;letter-spacing:-0.2px;">UROFLUXOMETRIA</div>
<div class="t" style="left:656px;top:364.69px;font-size:11px;line-height:13px;color:#000;letter-spacing:-0.2px;">HOSPITAL</div>
<div class="t" style="left:720px;width:59px;overflow:hidden;top:364.70px;font-size:11px;line-height:13px;color:#000;letter-spacing:-0.2px">Exame</div>
<div class="t" style="left:781px;width:63px;text-align:center;top:364.70px;font-size:11px;line-height:13px;color:#000;letter-spacing:-0.2px">Sim</div>
<div class="t" style="left:1048px;top:364.69px;font-size:11px;line-height:13px;color:#000;letter-spacing:-0.2px;">Sim</div>
<div class="t" style="left:131px;width:62px;text-align:right;top:382.70px;font-size:11px;line-height:13px;color:#000;letter-spacing:-0.2px">11</div>
<div class="t" style="left:198px;top:382.69px;font-size:11px;line-height:13px;color:#000;letter-spacing:-0.2px;">ESPIROMETRIA</div>
<div class="t" style="left:656px;top:382.69px;font-size:11px;line-height:13px;color:#000;letter-spacing:-0.2px;">HOSPITAL</div>
<div class="t" style="left:720px;width:59px;overflow:hidden;top:382.70px;font-size:11px;line-height:13px;color:#000;letter-spacing:-0.2px">Exame</div>
<div class="t" style="left:781px;width:63px;text-align:center;top:382.70px;font-size:11px;line-height:13px;color:#000;letter-spacing:-0.2px">Sim</div>
<div class="t" style="left:1048px;top:382.69px;font-size:11px;line-height:13px;color:#000;letter-spacing:-0.2px;">Sim</div>
<div class="t" style="left:131px;width:62px;text-align:right;top:400.70px;font-size:11px;line-height:13px;color:#000;letter-spacing:-0.2px">12</div>
<div class="t" style="left:198px;top:400.69px;font-size:11px;line-height:13px;color:#000;letter-spacing:-0.2px;">ULTRASSOM-2</div>
<div class="t" style="left:656px;top:400.69px;font-size:11px;line-height:13px;color:#000;letter-spacing:-0.2px;">HOSPITAL</div>
<div class="t" style="left:720px;width:59px;overflow:hidden;top:400.70px;font-size:11px;line-height:13px;color:#000;letter-spacing:-0.2px">Exame</div>
<div class="t" style="left:781px;width:63px;text-align:center;top:400.70px;font-size:11px;line-height:13px;color:#000;letter-spacing:-0.2px">Sim</div>
<div class="t" style="left:1048px;top:400.69px;font-size:11px;line-height:13px;color:#000;letter-spacing:-0.2px;">Sim</div>
<div class="t" style="left:131px;width:62px;text-align:right;top:418.70px;font-size:11px;line-height:13px;color:#000;letter-spacing:-0.2px">14</div>
<div class="t" style="left:198px;top:418.69px;font-size:11px;line-height:13px;color:#000;letter-spacing:-0.2px;">Sala Cirurgia</div>
<div class="t" style="left:656px;top:418.69px;font-size:11px;line-height:13px;color:#000;letter-spacing:-0.2px;">HOSPITAL</div>
<div class="t" style="left:720px;width:59px;overflow:hidden;top:418.70px;font-size:11px;line-height:13px;color:#000;letter-spacing:-0.2px">Cirurgia</div>
<div class="t" style="left:781px;width:63px;text-align:center;top:418.70px;font-size:11px;line-height:13px;color:#000;letter-spacing:-0.2px">Sim</div>
<div class="t" style="left:1048px;top:418.69px;font-size:11px;line-height:13px;color:#000;letter-spacing:-0.2px;">Sim</div>
<div class="t" style="left:131px;width:62px;text-align:right;top:436.70px;font-size:11px;line-height:13px;color:#000;letter-spacing:-0.2px">15</div>
<div class="t" style="left:198px;top:436.69px;font-size:11px;line-height:13px;color:#000;letter-spacing:-0.2px;">CIRURGIA GERAL</div>
<div class="t" style="left:656px;top:436.69px;font-size:11px;line-height:13px;color:#000;letter-spacing:-0.2px;">HOSPITAL</div>
<div class="t" style="left:720px;width:59px;overflow:hidden;top:436.70px;font-size:11px;line-height:13px;color:#000;letter-spacing:-0.2px">Cirurgia</div>
<div class="t" style="left:781px;width:63px;text-align:center;top:436.70px;font-size:11px;line-height:13px;color:#000;letter-spacing:-0.2px">Sim</div>
<div class="t" style="left:1048px;top:436.69px;font-size:11px;line-height:13px;color:#000;letter-spacing:-0.2px;">Sim</div>
<div class="t" style="left:131px;width:62px;text-align:right;top:454.70px;font-size:11px;line-height:13px;color:#000;letter-spacing:-0.2px">16</div>
<div class="t" style="left:198px;top:454.69px;font-size:11px;line-height:13px;color:#000;letter-spacing:-0.2px;">Cirurgia WM</div>
<div class="t" style="left:656px;top:454.69px;font-size:11px;line-height:13px;color:#000;letter-spacing:-0.2px;">HOSPITAL</div>
<div class="t" style="left:720px;width:59px;overflow:hidden;top:454.70px;font-size:11px;line-height:13px;color:#000;letter-spacing:-0.2px">Cirurgia</div>
<div class="t" style="left:781px;width:63px;text-align:center;top:454.70px;font-size:11px;line-height:13px;color:#000;letter-spacing:-0.2px">Sim</div>
<div class="t" style="left:1048px;top:454.69px;font-size:11px;line-height:13px;color:#000;letter-spacing:-0.2px;">Sim</div>
<div class="t" style="left:131px;width:62px;text-align:right;top:472.70px;font-size:11px;line-height:13px;color:#000;letter-spacing:-0.2px">17</div>
<div class="t" style="left:198px;top:472.69px;font-size:11px;line-height:13px;color:#000;letter-spacing:-0.2px;">Cirurgia URO</div>
<div class="t" style="left:656px;top:472.69px;font-size:11px;line-height:13px;color:#000;letter-spacing:-0.2px;">HOSPITAL</div>
<div class="t" style="left:720px;width:59px;overflow:hidden;top:472.70px;font-size:11px;line-height:13px;color:#000;letter-spacing:-0.2px">Cirurgia</div>
<div class="t" style="left:781px;width:63px;text-align:center;top:472.70px;font-size:11px;line-height:13px;color:#000;letter-spacing:-0.2px">Sim</div>
<div class="t" style="left:1048px;top:472.69px;font-size:11px;line-height:13px;color:#000;letter-spacing:-0.2px;">Sim</div>
<div class="t" style="left:131px;width:62px;text-align:right;top:490.70px;font-size:11px;line-height:13px;color:#000;letter-spacing:-0.2px">18</div>
<div class="t" style="left:198px;top:490.69px;font-size:11px;line-height:13px;color:#000;letter-spacing:-0.2px;">Ultrasom Residentes</div>
<div class="t" style="left:656px;top:490.69px;font-size:11px;line-height:13px;color:#000;letter-spacing:-0.2px;">HOSPITAL</div>
<div class="t" style="left:720px;width:59px;overflow:hidden;top:490.70px;font-size:11px;line-height:13px;color:#000;letter-spacing:-0.2px">Exame</div>
<div class="t" style="left:781px;width:63px;text-align:center;top:490.70px;font-size:11px;line-height:13px;color:#000;letter-spacing:-0.2px">Sim</div>
<div class="t" style="left:1048px;top:490.69px;font-size:11px;line-height:13px;color:#000;letter-spacing:-0.2px;">Sim</div>
<div class="t" style="left:131px;width:62px;text-align:right;top:508.70px;font-size:11px;line-height:13px;color:#000;letter-spacing:-0.2px">19</div>
<div class="t" style="left:198px;top:508.69px;font-size:11px;line-height:13px;color:#000;letter-spacing:-0.2px;">Broncoscopia</div>
<div class="t" style="left:656px;top:508.69px;font-size:11px;line-height:13px;color:#000;letter-spacing:-0.2px;">HOSPITAL</div>
<div class="t" style="left:720px;width:59px;overflow:hidden;top:508.70px;font-size:11px;line-height:13px;color:#000;letter-spacing:-0.2px">Exame</div>
<div class="t" style="left:781px;width:63px;text-align:center;top:508.70px;font-size:11px;line-height:13px;color:#000;letter-spacing:-0.2px">Sim</div>
<div class="t" style="left:1048px;top:508.69px;font-size:11px;line-height:13px;color:#000;letter-spacing:-0.2px;">Sim</div>
<div class="t" style="left:131px;width:62px;text-align:right;top:526.70px;font-size:11px;line-height:13px;color:#000;letter-spacing:-0.2px">20</div>
<div class="t" style="left:198px;top:526.69px;font-size:11px;line-height:13px;color:#000;letter-spacing:-0.2px;">ULTRASSOM MELILA extra</div>
<div class="t" style="left:502px;top:526.69px;font-size:11px;line-height:13px;color:#000;letter-spacing:-0.2px;">ULTRASSOM MELILA extra</div>
<div class="t" style="left:656px;top:526.69px;font-size:11px;line-height:13px;color:#000;letter-spacing:-0.2px;">HOSPITAL</div>
<div class="t" style="left:720px;width:59px;overflow:hidden;top:526.70px;font-size:11px;line-height:13px;color:#000;letter-spacing:-0.2px">Exame</div>
<div class="t" style="left:781px;width:63px;text-align:center;top:526.70px;font-size:11px;line-height:13px;color:#000;letter-spacing:-0.2px">Sim</div>
<div class="t" style="left:1048px;top:526.69px;font-size:11px;line-height:13px;color:#000;letter-spacing:-0.2px;">Sim</div>
<div class="t" style="left:131px;width:62px;text-align:right;top:544.70px;font-size:11px;line-height:13px;color:#000;letter-spacing:-0.2px">21</div>
<div class="t" style="left:198px;top:544.69px;font-size:11px;line-height:13px;color:#000;letter-spacing:-0.2px;">hemodinamica</div>
<div class="t" style="left:656px;top:544.69px;font-size:11px;line-height:13px;color:#000;letter-spacing:-0.2px;">HOSPITAL</div>
<div class="t" style="left:720px;width:59px;overflow:hidden;top:544.70px;font-size:11px;line-height:13px;color:#000;letter-spacing:-0.2px">Exame</div>
<div class="t" style="left:781px;width:63px;text-align:center;top:544.70px;font-size:11px;line-height:13px;color:#000;letter-spacing:-0.2px">Sim</div>
<div class="t" style="left:1048px;top:544.69px;font-size:11px;line-height:13px;color:#000;letter-spacing:-0.2px;">Sim</div>
<div class="t" style="left:131px;width:62px;text-align:right;top:562.70px;font-size:11px;line-height:13px;color:#000;letter-spacing:-0.2px">23</div>
<div class="t" style="left:198px;top:562.69px;font-size:11px;line-height:13px;color:#000;letter-spacing:-0.2px;">FISIOTERAPIA</div>
<div class="t" style="left:502px;top:562.69px;font-size:11px;line-height:13px;color:#000;letter-spacing:-0.2px;">FISIOTERAPIA</div>
<div class="t" style="left:656px;top:562.69px;font-size:11px;line-height:13px;color:#000;letter-spacing:-0.2px;">HOSPITAL</div>
<div class="t" style="left:720px;width:59px;overflow:hidden;top:562.70px;font-size:11px;line-height:13px;color:#000;letter-spacing:-0.2px">Exame</div>
<div class="t" style="left:781px;width:63px;text-align:center;top:562.70px;font-size:11px;line-height:13px;color:#000;letter-spacing:-0.2px">Sim</div>
<div class="t" style="left:1048px;top:562.69px;font-size:11px;line-height:13px;color:#000;letter-spacing:-0.2px;">Sim</div>
<div class="t" style="left:131px;width:62px;text-align:right;top:580.70px;font-size:11px;line-height:13px;color:#000;letter-spacing:-0.2px">25</div>
<div class="t" style="left:198px;top:580.69px;font-size:11px;line-height:13px;color:#000;letter-spacing:-0.2px;">MANOGRAFIA</div>
<div class="t" style="left:502px;top:580.69px;font-size:11px;line-height:13px;color:#000;letter-spacing:-0.2px;">MANOGRAFIA</div>
<div class="t" style="left:656px;top:580.69px;font-size:11px;line-height:13px;color:#000;letter-spacing:-0.2px;">HOSPITAL</div>
<div class="t" style="left:720px;width:59px;overflow:hidden;top:580.70px;font-size:11px;line-height:13px;color:#000;letter-spacing:-0.2px">Exame</div>
<div class="t" style="left:781px;width:63px;text-align:center;top:580.70px;font-size:11px;line-height:13px;color:#000;letter-spacing:-0.2px">Sim</div>
<div class="t" style="left:1048px;top:580.69px;font-size:11px;line-height:13px;color:#000;letter-spacing:-0.2px;">Sim</div>
<div class="t" style="left:131px;width:62px;text-align:right;top:598.70px;font-size:11px;line-height:13px;color:#000;letter-spacing:-0.2px">26</div>
<div class="t" style="left:198px;top:598.69px;font-size:11px;line-height:13px;color:#000;letter-spacing:-0.2px;">cirurgia jefferson</div>
<div class="t" style="left:502px;top:598.69px;font-size:11px;line-height:13px;color:#000;letter-spacing:-0.2px;">cirurgia jefferson</div>
<div class="t" style="left:656px;top:598.69px;font-size:11px;line-height:13px;color:#000;letter-spacing:-0.2px;">HOSPITAL</div>
<div class="t" style="left:720px;width:59px;overflow:hidden;top:598.70px;font-size:11px;line-height:13px;color:#000;letter-spacing:-0.2px">Cirurgia</div>
<div class="t" style="left:781px;width:63px;text-align:center;top:598.70px;font-size:11px;line-height:13px;color:#000;letter-spacing:-0.2px">Sim</div>
<div class="t" style="left:1048px;top:598.69px;font-size:11px;line-height:13px;color:#000;letter-spacing:-0.2px;">Sim</div>
<div class="t" style="left:131px;width:62px;text-align:right;top:616.70px;font-size:11px;line-height:13px;color:#000;letter-spacing:-0.2px">27</div>
<div class="t" style="left:198px;top:616.69px;font-size:11px;line-height:13px;color:#000;letter-spacing:-0.2px;">teste cirugria</div>
<div class="t" style="left:502px;top:616.69px;font-size:11px;line-height:13px;color:#000;letter-spacing:-0.2px;">teste cirugria</div>
<div class="t" style="left:656px;top:616.69px;font-size:11px;line-height:13px;color:#000;letter-spacing:-0.2px;">HOSPITAL</div>
<div class="t" style="left:720px;width:59px;overflow:hidden;top:616.70px;font-size:11px;line-height:13px;color:#000;letter-spacing:-0.2px">Avulsa</div>
<div class="t" style="left:781px;width:63px;text-align:center;top:616.70px;font-size:11px;line-height:13px;color:#000;letter-spacing:-0.2px">Sim</div>
<div class="t" style="left:1048px;top:616.69px;font-size:11px;line-height:13px;color:#000;letter-spacing:-0.2px;">Sim</div>
<div class="t" style="left:131px;width:62px;text-align:right;top:634.70px;font-size:11px;line-height:13px;color:#000;letter-spacing:-0.2px">28</div>
<div class="t" style="left:198px;top:634.69px;font-size:11px;line-height:13px;color:#000;letter-spacing:-0.2px;">teste</div>
<div class="t" style="left:656px;top:634.69px;font-size:11px;line-height:13px;color:#000;letter-spacing:-0.2px;">HOSPITAL</div>
<div class="t" style="left:720px;width:59px;overflow:hidden;top:634.70px;font-size:11px;line-height:13px;color:#000;letter-spacing:-0.2px">Exame</div>
<div class="t" style="left:781px;width:63px;text-align:center;top:634.70px;font-size:11px;line-height:13px;color:#000;letter-spacing:-0.2px">Sim</div>
<div class="t" style="left:1048px;top:634.69px;font-size:11px;line-height:13px;color:#000;letter-spacing:-0.2px;">Sim</div>
<div class="t" style="left:131px;width:62px;text-align:right;top:652.70px;font-size:11px;line-height:13px;color:#fff;letter-spacing:-0.2px">33</div>
<div class="t" style="left:198px;top:652.69px;font-size:11px;line-height:13px;color:#fff;letter-spacing:-0.2px;">SALA CIRURGICA 01</div>
<div class="t" style="left:502px;top:652.69px;font-size:11px;line-height:13px;color:#fff;letter-spacing:-0.2px;">SALA 01</div>
<div class="t" style="left:656px;top:652.69px;font-size:11px;line-height:13px;color:#fff;letter-spacing:-0.2px;">HOSPITAL</div>
<div class="t" style="left:720px;width:59px;overflow:hidden;top:652.70px;font-size:11px;line-height:13px;color:#fff;letter-spacing:-0.2px">Cirurgia</div>
<div class="t" style="left:781px;width:63px;text-align:center;top:652.70px;font-size:11px;line-height:13px;color:#fff;letter-spacing:-0.2px">Sim</div>
<div class="t" style="left:1048px;top:652.69px;font-size:11px;line-height:13px;color:#fff;letter-spacing:-0.2px;">Não</div>
<div class="t" style="left:131px;width:62px;text-align:right;top:670.70px;font-size:11px;line-height:13px;color:#000;letter-spacing:-0.2px">32</div>
<div class="t" style="left:198px;top:670.69px;font-size:11px;line-height:13px;color:#000;letter-spacing:-0.2px;">FISIO NOVA</div>
<div class="t" style="left:502px;top:670.69px;font-size:11px;line-height:13px;color:#000;letter-spacing:-0.2px;">FISIO</div>
<div class="t" style="left:656px;top:670.69px;font-size:11px;line-height:13px;color:#000;letter-spacing:-0.2px;">HOSPITAL</div>
<div class="t" style="left:720px;width:59px;overflow:hidden;top:670.70px;font-size:11px;line-height:13px;color:#000;letter-spacing:-0.2px">Agenda de S</div>
<div class="t" style="left:781px;width:63px;text-align:center;top:670.70px;font-size:11px;line-height:13px;color:#000;letter-spacing:-0.2px">Sim</div>
<div class="t" style="left:848px;top:670.69px;font-size:11px;line-height:13px;color:#000;letter-spacing:-0.2px;">10</div>
<div class="t" style="left:1048px;top:670.69px;font-size:11px;line-height:13px;color:#000;letter-spacing:-0.2px;">Sim</div>
<div class="b" style="left:7px;top:702px;width:1294px;height:1px;background:#fbfbfb;"></div>
<div class="b" style="left:7px;top:703px;width:1294px;height:1px;background:#e4e6ea;"></div>
<div class="b" style="left:7px;top:704px;width:1294px;height:2px;background:#cfd2d8;"></div>
<div class="b" style="left:828px;top:702px;width:20px;height:4px;background:linear-gradient(#fbfbfb,#f2f2f2);"></div>
<svg style="left:828px;top:700px" width="22" height="6"><g stroke="#707070" stroke-width="1.3"><path d="M3.3 2.6 L2.2 4.6"/><path d="M7.3 2.6 L6.2 4.6"/><path d="M11.3 2.6 L10.2 4.6"/><path d="M15.3 2.6 L14.2 4.6"/><path d="M19.3 2.6 L18.2 4.6"/></g></svg>
<div class="b" style="left:119px;top:706px;width:1px;height:273px;background:#d8d8d8;"></div>
<div class="b" style="left:120px;top:731px;width:3px;height:247px;background:#fff;"></div>
<div class="b" style="left:175px;top:708px;width:50px;height:19px;background:#f0f0f0;border:1px solid #d9d9d9;border-bottom:none;"></div>
<div class="t" style="left:181px;top:711.29px;font-size:11px;line-height:13px;color:#000;letter-spacing:-0.2px;">Horários</div>
<div class="b" style="left:224px;top:708px;width:63px;height:19px;background:#f0f0f0;border:1px solid #d9d9d9;border-bottom:none;"></div>
<div class="t" style="left:231.3px;top:711.29px;font-size:11px;line-height:13px;color:#000;letter-spacing:-0.2px;">Restrições</div>
<div class="b" style="left:286px;top:708px;width:176px;height:19px;background:#f0f0f0;border:1px solid #d9d9d9;border-bottom:none;"></div>
<div class="t" style="left:293.3px;top:711.29px;font-size:11px;line-height:13px;color:#000;letter-spacing:-0.2px;">Restrições por Taxa de Ocupação</div>
<div class="b" style="left:461px;top:708px;width:119px;height:19px;background:#f0f0f0;border:1px solid #d9d9d9;border-bottom:none;"></div>
<div class="t" style="left:467.6px;top:711.29px;font-size:11px;line-height:13px;color:#000;letter-spacing:-0.2px;">Convênios não Atende</div>
<div class="b" style="left:120px;top:726px;width:1181px;height:1px;background:#d9d9d9;"></div>
<div class="b" style="left:120px;top:727px;width:1181px;height:3px;background:#fff;"></div>
<div class="b" style="left:120px;top:730px;width:1181px;height:1px;background:#a9aeb4;"></div>
<div class="b" style="left:120px;top:707px;width:56px;height:23px;background:#fff;border:1px solid #d9d9d9;border-bottom:none;"></div>
<div class="t" style="left:127.3px;top:709.69px;font-size:11px;line-height:13px;color:#000;letter-spacing:-0.2px;">Usuários</div>
<div class="b" style="left:123px;top:731px;width:1px;height:245px;background:#a9b4c0;"></div>
<div class="b" style="left:123px;top:975px;width:1178px;height:1px;background:#a9b4c0;"></div>
<div class="b" style="left:120px;top:976px;width:1181px;height:2px;background:#fff;"></div>
<div class="b" style="left:119px;top:978px;width:1182px;height:1px;background:#d8d8d8;"></div>
<div class="b" style="left:124px;top:731px;width:1177px;height:26px;background:#eff0f2;"></div>
<div class="b" style="left:124px;top:757px;width:1177px;height:1px;background:#6e6e6e;"></div>
<div class="b" style="left:128px;top:735px;width:346px;height:19px;background:#f0f0f0;border:1px solid #b7c0c9;"></div>
<div class="t" style="left:130.5px;top:737.39px;font-size:11px;line-height:13px;color:#444;letter-spacing:-0.2px;">Digite Aqui para Filtrar os Resultados Abaixo</div>
<svg style="left:461px;top:743px" width="8" height="5"><path d="M0.5 0.5 L6.5 0.5 L3.5 3.5Z" fill="#606060"/></svg>
<div class="b" style="left:124px;top:758px;width:756px;height:21px;background:linear-gradient(#ffffff,#f6f6f8 40%,#e2e4e8 75%,#d4d6dc);border:1px solid #6e6e6e;"></div>
<div class="b" style="left:135px;top:758px;width:1px;height:21px;background:#6e6e6e;"></div>
<div class="b" style="left:263px;top:758px;width:1px;height:21px;background:#6e6e6e;"></div>
<div class="b" style="left:327px;top:758px;width:1px;height:21px;background:#6e6e6e;"></div>
<div class="b" style="left:391px;top:758px;width:1px;height:21px;background:#6e6e6e;"></div>
<div class="b" style="left:455px;top:758px;width:1px;height:21px;background:#6e6e6e;"></div>
<div class="b" style="left:519px;top:758px;width:1px;height:21px;background:#6e6e6e;"></div>
<div class="b" style="left:600px;top:758px;width:1px;height:21px;background:#6e6e6e;"></div>
<div class="b" style="left:703px;top:758px;width:1px;height:21px;background:#6e6e6e;"></div>
<div class="b" style="left:767px;top:758px;width:1px;height:21px;background:#6e6e6e;"></div>
<svg style="left:125px;top:762px" width="10" height="12"><g stroke="#7070a8" stroke-width="0.9" stroke-linecap="round"><path d="M4.5 3 L4.5 9.6 M1.2 6.3 L7.8 6.3 M2.2 4 L6.8 8.6 M2.2 8.6 L6.8 4"/></g><circle cx="4.5" cy="6.3" r="1" fill="#f0f0f4"/></svg>
<div class="t" style="left:140px;width:123px;overflow:hidden;top:762.00px;font-size:11px;line-height:13px;letter-spacing:-0.2px">Usuário</div>
<div class="t" style="left:268px;width:59px;overflow:hidden;top:762.00px;font-size:11px;line-height:13px;letter-spacing:-0.2px">Visualizar</div>
<div class="t" style="left:332px;width:59px;overflow:hidden;top:762.00px;font-size:11px;line-height:13px;letter-spacing:-0.2px">Incluir</div>
<div class="t" style="left:396px;width:59px;overflow:hidden;top:762.00px;font-size:11px;line-height:13px;letter-spacing:-0.2px">Editar</div>
<div class="t" style="left:460px;width:59px;overflow:hidden;top:762.00px;font-size:11px;line-height:13px;letter-spacing:-0.2px">Bloquear</div>
<div class="t" style="left:524px;width:76px;overflow:hidden;top:762.00px;font-size:11px;line-height:13px;letter-spacing:-0.2px">Desbloquear</div>
<div class="t" style="left:605px;width:98px;overflow:hidden;top:762.00px;font-size:11px;line-height:13px;letter-spacing:-0.2px">Ignorar Restrições</div>
<div class="t" style="left:708px;width:59px;overflow:hidden;top:762.00px;font-size:11px;line-height:13px;letter-spacing:-0.2px">Encaixes</div>
<div class="t" style="left:772px;width:107px;overflow:hidden;top:762.00px;font-size:11px;line-height:13px;letter-spacing:-0.2px">Lib. Tempo Excedente</div>
<div class="t" style="left:468.5px;top:871.19px;font-size:11px;line-height:13px;color:#000;letter-spacing:-0.4px;">&lt;Sem Registros&gt;</div>
<div class="b" style="left:8px;top:873px;width:110px;height:34px;background:#e1e1e1;border:1px solid #adadad;"></div>
<svg style="left:16px;top:880px" width="26" height="22"><defs><radialGradient id="pg873" cx="50%" cy="45%" r="60%"><stop offset="0" stop-color="#86c6d8"/><stop offset="1" stop-color="#4a90a8"/></radialGradient></defs><path d="M5.35 1 L11.65 1 L11.65 5.1 L15.9 5.1 L15.9 11.4 L11.65 11.4 L11.65 15.5 L5.35 15.5 L5.35 11.4 L1.1 11.4 L1.1 5.1 L5.35 5.1Z" fill="url(#pg873)" stroke="#4a8aa0" stroke-width="0.6"/><path d="M15.85 9.1 L20.45 9.1 L20.45 12.1 L22.9 12.1 L22.9 16.7 L20.45 16.7 L20.45 19.7 L15.85 19.7 L15.85 16.7 L13.4 16.7 L13.4 12.1 L15.85 12.1Z" fill="url(#pg873)" stroke="#4a8aa0" stroke-width="0.6"/></svg>
<div class="t" style="left:0px;width:160px;text-align:center;top:877.19px;font-size:11px;line-height:13px;color:#000;letter-spacing:-0.2px">Gerenciar</div>
<div class="t" style="left:0px;width:160px;text-align:center;top:890.19px;font-size:11px;line-height:13px;color:#000;letter-spacing:-0.2px">Usuário</div>
<div class="b" style="left:8px;top:909px;width:110px;height:34px;background:#cdcdcd;border:1px solid #c4c4c4;"></div>
<svg style="left:16px;top:914px" width="26" height="26"><defs><linearGradient id="pn909" x1="0" y1="1" x2="1" y2="0"><stop offset="0" stop-color="#4a94ac"/><stop offset="1" stop-color="#78b8cc"/></linearGradient></defs><path d="M1 22.8 L3.2 15.2 L16.2 2.2 Q17.6 0.8 19 2.2 L21.8 5 Q23.2 6.4 21.8 7.8 L8.8 20.8 Z" fill="url(#pn909)" stroke="#4a8aa0" stroke-width="0.5"/><path d="M6.6 15.6 L15.8 6.4 L17.9 8.5 L8.7 17.7Z" fill="#e4e4e4"/><circle cx="4.4" cy="19.6" r="0.9" fill="#e4e4e4"/></svg>
<div class="t" style="left:0px;width:160px;text-align:center;top:919.19px;font-size:11px;line-height:13px;color:#8d8d8d;letter-spacing:-0.2px">Alterar</div>
<div class="b" style="left:8px;top:945px;width:110px;height:34px;background:#cdcdcd;border:1px solid #c4c4c4;"></div>
<svg style="left:16px;top:957px" width="24" height="10"><defs><linearGradient id="mg945" x1="0" y1="0" x2="0" y2="1"><stop offset="0" stop-color="#7cc0d4"/><stop offset="1" stop-color="#4f9bb3"/></linearGradient></defs><rect x="1" y="1" width="22" height="8" fill="url(#mg945)"/></svg>
<div class="t" style="left:0px;width:160px;text-align:center;top:955.19px;font-size:11px;line-height:13px;color:#8d8d8d;letter-spacing:-0.2px">Excluir</div>
<div class="b" style="left:1px;top:984px;width:1300px;height:1px;background:#fff;"></div>
<div class="b" style="left:0px;top:985px;width:1301px;height:1px;background:#bcbcbc;"></div>
<div class="b" style="left:0px;top:986px;width:1301px;height:6px;background:linear-gradient(#e6e6e6,#f2f2f2);"></div>
<div class="b" style="left:0px;top:992px;width:1301px;height:1px;background:#a4a4a4;"></div>
<div class="b" style="left:0px;top:993px;width:1301px;height:1px;background:#fafafa;"></div>
<div class="b" style="left:302px;top:992px;width:2px;height:2px;background:#fff;"></div>
<div class="b" style="left:1248px;top:992px;width:2px;height:2px;background:#fff;"></div>
<div class="b" style="left:304px;top:993px;width:1px;height:1px;background:#a4a4a4;"></div>
<div class="b" style="left:1250px;top:993px;width:1px;height:1px;background:#a4a4a4;"></div>
<svg style="left:0;top:0" width="1301" height="994">
<defs><filter id="sh" x="-20%" y="-20%" width="140%" height="140%"><feGaussianBlur in="SourceAlpha" stdDeviation="2"/><feOffset dx="2" dy="2.5" result="o"/><feComponentTransfer><feFuncA type="linear" slope="0.5"/></feComponentTransfer><feMerge><feMergeNode/><feMergeNode in="SourceGraphic"/></feMerge></filter></defs>
<g filter="url(#sh)">
<path d="M421.9 636.5 L440.4 609.6 L445.4 617.7 L656.6 500 L671.3 500 L450.4 626.2 L454.6 634.6 Z" fill="#e84c48"/>
<rect x="574.75" y="393.6" width="380.3" height="114.5" rx="9" ry="6.5" fill="#fff" stroke="#e84c48" stroke-width="6.5"/>
</g>
<rect x="110.5" y="697.5" width="78" height="38" fill="none" stroke="#e84c48" stroke-width="5"/>
<ellipse cx="66" cy="889.5" rx="62.5" ry="25" fill="none" stroke="#e84c48" stroke-width="5"/>
<g filter="url(#sh)">
<path d="M140.8 905.4 L173.9 905 L170.1 914.5 L200 928.5 L200 939 L165.5 923.7 L160.9 931.8 Z" fill="#e84c48"/>
<rect x="197.5" y="892.6" width="264" height="74.2" rx="7" ry="5.5" fill="#fff" stroke="#e84c48" stroke-width="6"/>
</g>
</svg>
<div class="t" style="left:570px;width:388px;text-align:center;top:421.20px;font-size:24px;line-height:29px;color:#e84c48;letter-spacing:0px">Clicar para selecionar a agenda</div>
<div class="t" style="left:570px;width:388px;text-align:center;top:447.70px;font-size:24px;line-height:29px;color:#e84c48;letter-spacing:0px">que você acabou de criar.</div>
<div class="t" style="left:192.5px;width:270px;text-align:center;top:913.20px;font-size:24px;line-height:29px;color:#e84c48;">Depois clicar aqui.</div>
</body></html>
